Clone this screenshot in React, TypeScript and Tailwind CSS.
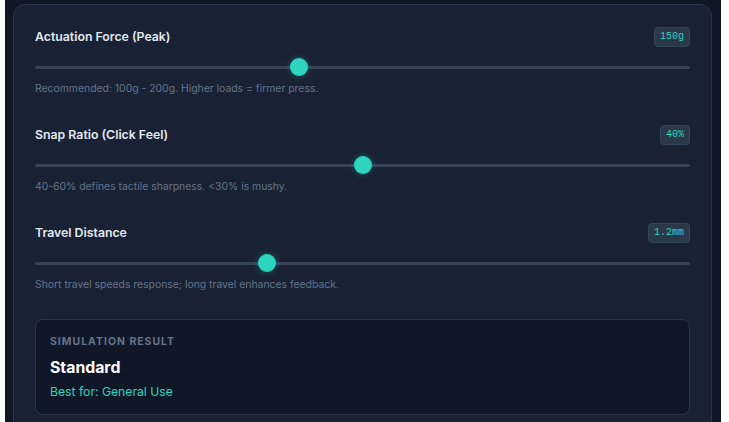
import React from "react";

const sliders = [
  { label: "Actuation Force (Peak)", value: "150g", pct: 0.4, help: "Recommended: 100g - 200g. Higher loads = firmer press." },
  { label: "Snap Ratio (Click Feel)", value: "40%", pct: 0.5, help: "40-60% defines tactile sharpness. <30% is mushy." },
  { label: "Travel Distance", value: "1.2mm", pct: 0.35, help: "Short travel speeds response; long travel enhances feedback." },
];

function Slider({ label, value, pct, help, first }: { label: string; value: string; pct: number; help: string; first: boolean }) {
  return (
    <div className={first ? "" : "mt-[27px]"}>
      <div className="flex h-[21px] items-center justify-between">
        <span className="pt-[1px] text-[12.3px] font-semibold text-[#e2e8f0]">{label}</span>
        <span className="flex h-[20px] items-center rounded-[4px] border border-[#34445a] bg-[#2a3849] px-[5px] text-[10px] text-[#2dd4bf]" style={{ fontFamily: "'Liberation Mono', 'DejaVu Sans Mono', monospace" }}>
          {value}
        </span>
      </div>
      <div className="relative mt-[11px] h-[18px]">
        <div className="absolute left-0 right-0 top-[7.5px] h-[3px] rounded-full bg-[#384456]" />
        <div
          className="absolute top-0 h-[18px] w-[18px] rounded-full bg-[#2dd4bf] shadow-[0_0_6px_rgba(45,212,191,0.35)]"
          style={{ left: `calc((100% - 18px) * ${pct})` }}
        />
      </div>
      <div className="mt-[5px] text-[10.4px] leading-[16px] text-[#64748b]">{help}</div>
    </div>
  );
}

export default function App() {
  return (
    <div className="h-[422px] w-[729px] overflow-hidden bg-white" style={{ fontFamily: "Inter, 'Noto Sans', sans-serif" }}>
      <div className="ml-[5px] h-[422px] w-[716px] bg-[#0f1626] pl-[8px] pr-[9px] pt-[4px]">
        <div className="h-[440px] rounded-[12px] border border-[#2a3547] bg-[#182234] px-[21px] pt-[21px]">
          {sliders.map((s, i) => (
            <Slider key={s.label} {...s} first={i === 0} />
          ))}
          <div className="mt-[26px] h-[96px] rounded-[8px] border border-[#2b3749] bg-[#101828] px-[14px] pt-[14px]">
            <div className="text-[10.4px] font-bold uppercase leading-[16px] tracking-[0.1em] text-[#64748b]">Simulation Result</div>
            <div className="mt-[6px] text-[15.8px] font-bold leading-[24px] text-white">Standard</div>
            <div className="mt-[2px] text-[12.2px] leading-[20px] text-[#2dd4bf]">Best for: General Use</div>
          </div>
        </div>
      </div>
    </div>
  );
}
